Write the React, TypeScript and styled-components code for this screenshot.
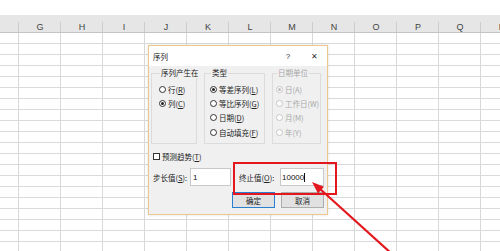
import React from "react";
import styled, { createGlobalStyle } from "styled-components";

const Global = createGlobalStyle`
  html, body { margin: 0; padding: 0; background: #fff; }
  body { font-family: "Noto Sans CJK SC", "Noto Sans", sans-serif; }
`;

const Page = styled.div`
  position: relative;
  width: 500px;
  height: 251px;
  overflow: hidden;
  background: #fff;
`;

const TopStrip = styled.div`
  height: 15px;
  background: #fff;
`;

const HeaderRow = styled.div`
  display: grid;
  grid-template-columns: 19px repeat(12, 42px);
  height: 17px;
  background: #e6e6e6;
  border-bottom: 1px solid #c4c4c4;
`;

const HeaderCell = styled.div`
  display: flex;
  justify-content: center;
  align-items: center;
  padding-top: 6px;
  font: 9px "Liberation Sans", Arial, sans-serif;
  color: #444;
  background: linear-gradient(#cdcdcd, #cdcdcd) right bottom / 1px 10px no-repeat;
`;

const SheetRow = styled.div`
  display: grid;
  grid-template-columns: 19px repeat(12, 42px);
  height: 10px;
  border-bottom: 1px solid #dadada;
`;

const Cell = styled.div`
  border-right: 1px solid #d8d8d8;
`;

const Dialog = styled.div`
  position: absolute;
  left: 148px;
  top: 45px;
  width: 180px;
  box-sizing: border-box;
  border: 1px solid #ecc88e;
  background: #f0f0f0;
  box-shadow: 0 0 3px rgba(0, 0, 0, 0.12);
  font-family: "Noto Sans CJK SC", sans-serif;
  font-size: 7.5px;
  color: #222;
`;

const TitleBar = styled.div`
  display: flex;
  align-items: center;
  height: 20px;
  background: #fff;
  padding-left: 4px;
`;

const Title = styled.span`
  flex: 1;
  font-size: 7.5px;
`;

const TitleButton = styled.span`
  width: 26px;
  display: flex;
  justify-content: center;
  align-items: center;
  font-family: "Liberation Sans", Arial, sans-serif;
  font-size: 8px;
  color: #333;
`;

const Body = styled.div`
  padding: 2px 3px 6px 2px;
`;

const Groups = styled.div`
  display: flex;
`;

const GroupBox = styled.fieldset<{ $w: number; $ml: number; $pl: number }>`
  box-sizing: border-box;
  width: ${(p) => p.$w}px;
  height: 76px;
  min-width: 0;
  margin: 0 0 0 ${(p) => p.$ml}px;
  padding: 4px 0 0 ${(p) => p.$pl}px;
  border: 1px solid #dcdcdc;
`;

const Legend = styled.legend<{ $disabled?: boolean }>`
  padding: 0 1px;
  margin-left: 1px;
  font-size: 7.5px;
  line-height: 10px;
  white-space: nowrap;
  color: ${(p) => (p.$disabled ? "#a6a6a6" : "#222")};
`;

const RadioItem = styled.div<{ $disabled?: boolean }>`
  display: flex;
  align-items: center;
  gap: 2px;
  height: 14.4px;
  white-space: nowrap;
  color: ${(p) => (p.$disabled ? "#a8a8a8" : "#222")};
`;

const RadioCircle = styled.span<{ $checked?: boolean; $disabled?: boolean }>`
  box-sizing: border-box;
  width: 7px;
  height: 7px;
  flex: none;
  border-radius: 50%;
  border: 1px solid ${(p) => (p.$disabled ? "#c6c6c6" : "#333")};
  background: #fff;
  display: flex;
  justify-content: center;
  align-items: center;
  &::after {
    content: "";
    width: 3px;
    height: 3px;
    border-radius: 50%;
    background: ${(p) =>
      p.$checked ? (p.$disabled ? "#bdbdbd" : "#222") : "transparent"};
  }
`;

const CheckRow = styled.div`
  display: flex;
  align-items: center;
  gap: 2px;
  height: 8px;
  margin-top: 8px;
  padding-left: 2px;
`;

const CheckBox = styled.span`
  box-sizing: border-box;
  width: 7px;
  height: 7px;
  border: 1px solid #333;
  background: #fff;
`;

const FieldRow = styled.div`
  display: flex;
  align-items: center;
  height: 18px;
  margin-top: 8px;
  padding-left: 2px;
`;

const FieldLabel = styled.span<{ $w: number; $ml?: number }>`
  width: ${(p) => p.$w}px;
  margin-left: ${(p) => p.$ml ?? 0}px;
  white-space: nowrap;
`;

const TextField = styled.div<{ $w: number; $pl: number }>`
  box-sizing: border-box;
  width: ${(p) => p.$w}px;
  height: 18px;
  display: flex;
  align-items: center;
  padding-left: ${(p) => p.$pl}px;
  background: #fff;
  border: 1px solid #c9c9c9;
  font-family: "Liberation Sans", Arial, sans-serif;
  font-size: 8px;
  color: #111;
`;

const Caret = styled.span`
  width: 1px;
  height: 9px;
  background: #111;
`;

const ButtonRow = styled.div`
  display: flex;
  justify-content: flex-end;
  gap: 6px;
  margin-top: 6px;
`;

const Button = styled.div<{ $primary?: boolean }>`
  box-sizing: border-box;
  width: 43px;
  height: 16px;
  display: flex;
  justify-content: center;
  align-items: center;
  background: #e1e1e1;
  border: 1px solid ${(p) => (p.$primary ? "#2b7fd0" : "#adadad")};
  font-size: 7.5px;
  color: #222;
`;

const Highlight = styled.div`
  position: absolute;
  left: 233px;
  top: 162px;
  width: 104px;
  height: 33px;
  box-sizing: border-box;
  border: 2px solid #e3181f;
`;

const ArrowLayer = styled.svg`
  position: absolute;
  left: 0;
  top: 0;
  pointer-events: none;
`;

const columns = ["", "G", "H", "I", "J", "K", "L", "M", "N", "O", "P", "Q", "R"];
const rows = Array.from({ length: 20 }, (_, i) => i);

export default function App() {
  return (
    <>
      <Global />
      <Page>
        <TopStrip />
        <HeaderRow>
          {columns.map((c, i) => (
            <HeaderCell key={i}>{c}</HeaderCell>
          ))}
        </HeaderRow>
        {rows.map((r) => (
          <SheetRow key={r}>
            {columns.map((_, i) => (
              <Cell key={i} />
            ))}
          </SheetRow>
        ))}

        <Dialog>
          <TitleBar>
            <Title>序列</Title>
            <TitleButton>?</TitleButton>
            <TitleButton>✕</TitleButton>
          </TitleBar>
          <Body>
            <Groups>
              <GroupBox $w={46} $ml={0} $pl={7}>
                <Legend>序列产生在</Legend>
                <RadioItem>
                  <RadioCircle />
                  <span>
                    行(<u>R</u>)
                  </span>
                </RadioItem>
                <RadioItem>
                  <RadioCircle $checked />
                  <span>
                    列(<u>C</u>)
                  </span>
                </RadioItem>
              </GroupBox>
              <GroupBox $w={61} $ml={7} $pl={5}>
                <Legend>类型</Legend>
                <RadioItem>
                  <RadioCircle $checked />
                  <span>
                    等差序列(<u>L</u>)
                  </span>
                </RadioItem>
                <RadioItem>
                  <RadioCircle />
                  <span>
                    等比序列(<u>G</u>)
                  </span>
                </RadioItem>
                <RadioItem>
                  <RadioCircle />
                  <span>
                    日期(<u>D</u>)
                  </span>
                </RadioItem>
                <RadioItem>
                  <RadioCircle />
                  <span>
                    自动填充(<u>F</u>)
                  </span>
                </RadioItem>
              </GroupBox>
              <GroupBox $w={49} $ml={7} $pl={3}>
                <Legend $disabled>日期单位</Legend>
                <RadioItem $disabled>
                  <RadioCircle $checked $disabled />
                  <span>日(A)</span>
                </RadioItem>
                <RadioItem $disabled>
                  <RadioCircle $disabled />
                  <span>工作日(W)</span>
                </RadioItem>
                <RadioItem $disabled>
                  <RadioCircle $disabled />
                  <span>月(M)</span>
                </RadioItem>
                <RadioItem $disabled>
                  <RadioCircle $disabled />
                  <span>年(Y)</span>
                </RadioItem>
              </GroupBox>
            </Groups>
            <CheckRow>
              <CheckBox />
              <span>
                预测趋势(<u>T</u>)
              </span>
            </CheckRow>
            <FieldRow>
              <FieldLabel $w={37}>
                步长值(<u>S</u>):
              </FieldLabel>
              <TextField $w={41} $pl={2}>
                1
              </TextField>
              <FieldLabel $w={41} $ml={8}>
                终止值(<u>O</u>):
              </FieldLabel>
              <TextField $w={44} $pl={1}>
                10000
                <Caret />
              </TextField>
            </FieldRow>
            <ButtonRow>
              <Button $primary>确定</Button>
              <Button>取消</Button>
            </ButtonRow>
          </Body>
        </Dialog>

        <Highlight />
        <ArrowLayer width={500} height={251} viewBox="0 0 500 251">
          <line x1={319} y1={188} x2={392} y2={254} stroke="#e3181f" strokeWidth={2.2} />
          <polygon points="312,182 318,193.5 324,186.8" fill="#e3181f" />
        </ArrowLayer>
      </Page>
    </>
  );
}
